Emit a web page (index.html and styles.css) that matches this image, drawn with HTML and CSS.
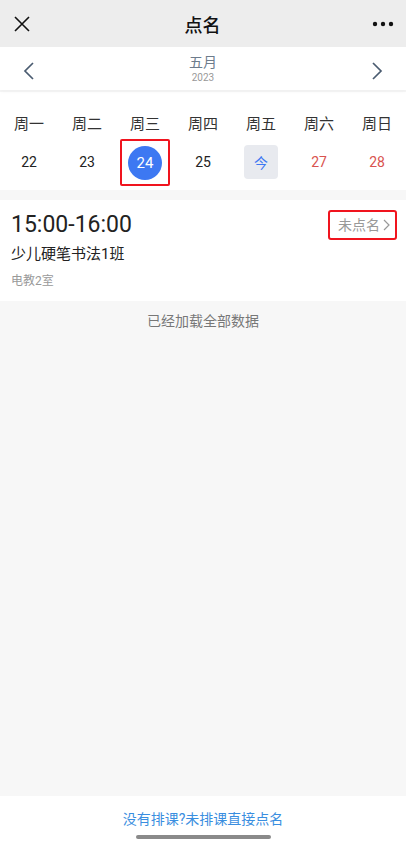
FILE: index.html
```html
<!DOCTYPE html>
<html>
<head>
  <meta charset="utf-8">
  <title>点名</title>
  <link rel="stylesheet" href="styles.css">
</head>
<body>
  <div class="page">
    <div class="topbar">
      <span class="top-icon">
        <svg width="18" height="18" viewBox="0 0 18 18"><path d="M2 2 L16 16 M16 2 L2 16" stroke="#111" stroke-width="1.6" fill="none"/></svg>
      </span>
      <div class="title">点名</div>
      <span class="top-icon">
        <svg width="22" height="6" viewBox="0 0 22 6"><circle cx="3" cy="3" r="2.2" fill="#111"/><circle cx="11" cy="3" r="2.2" fill="#111"/><circle cx="19" cy="3" r="2.2" fill="#111"/></svg>
      </span>
    </div>

    <div class="monthbar">
      <span class="arrow">
        <svg width="12" height="18" viewBox="0 0 12 18"><path d="M10 1 L2 9 L10 17" stroke="#4a5b70" stroke-width="1.7" fill="none"/></svg>
      </span>
      <div class="month">
        <div class="month-name">五月</div>
        <div class="month-year">2023</div>
      </div>
      <span class="arrow">
        <svg width="12" height="18" viewBox="0 0 12 18"><path d="M2 1 L10 9 L2 17" stroke="#4a5b70" stroke-width="1.7" fill="none"/></svg>
      </span>
    </div>

    <div class="week">
      <div class="week-labels">
        <span>周一</span><span>周二</span><span>周三</span><span>周四</span><span>周五</span><span>周六</span><span>周日</span>
      </div>
      <div class="week-days">
        <div class="day"><span>22</span></div>
        <div class="day"><span>23</span></div>
        <div class="day"><span class="marked"><span class="picked">24</span></span></div>
        <div class="day"><span>25</span></div>
        <div class="day"><span class="today">今</span></div>
        <div class="day weekend"><span>27</span></div>
        <div class="day weekend"><span>28</span></div>
      </div>
    </div>

    <div class="lesson">
      <div class="lesson-head">
        <div class="lesson-time">15:00-16:00</div>
        <span class="lesson-state">未点名
          <svg width="7" height="12" viewBox="0 0 7 12"><path d="M1 1 L6 6 L1 11" stroke="#999" stroke-width="1.2" fill="none"/></svg>
        </span>
      </div>
      <div class="lesson-name">少儿硬笔书法1班</div>
      <div class="lesson-room">电教2室</div>
    </div>

    <div class="loaded">已经加载全部数据</div>

    <div class="footer">
      <a class="direct">没有排课?未排课直接点名</a>
      <div class="home-bar"></div>
    </div>
  </div>
</body>
</html>
```

FILE: styles.css
```css
body {
  margin: 0;
  font-family: Roboto, "Noto Sans CJK SC", sans-serif;
  background-color: #f7f7f7;
  color: #222;
}

.page {
  min-height: 850px;
  display: flex;
  flex-direction: column;
}

.topbar {
  height: 47px;
  background-color: #ededed;
  display: flex;
  align-items: center;
  justify-content: space-between;
  padding: 0 12px 0 11px;
}

.top-icon {
  width: 22px;
  display: flex;
  justify-content: center;
}

.title {
  font-size: 18px;
  font-weight: 500;
  color: #111;
}

.monthbar {
  height: 43px;
  background-color: #fff;
  display: flex;
  align-items: center;
  justify-content: space-between;
  padding: 0 23px;
  box-shadow: 0 2px 3px rgba(0, 0, 0, 0.03);
  position: relative;
}

.arrow {
  display: flex;
  padding-top: 4px;
}

.month {
  text-align: center;
}

.month-name {
  font-size: 14px;
  line-height: 18px;
  color: #6d7c8c;
}

.month-year {
  font-size: 10px;
  line-height: 13px;
  color: #999;
}

.week {
  background-color: #fff;
  padding: 22px 0 11px;
  margin-top: 2px;
}

.week-labels,
.week-days {
  display: grid;
  grid-template-columns: repeat(7, 1fr);
  text-align: center;
}

.week-labels span {
  font-size: 15px;
  line-height: 20px;
  color: #333;
}

.week-days {
  margin-top: 11px;
}

.day {
  height: 34px;
  display: flex;
  align-items: center;
  justify-content: center;
  font-size: 14px;
  color: #222;
}

.day.weekend {
  color: #d9534f;
}

.marked {
  border: 2px solid #f0141e;
  border-radius: 2px;
  width: 46px;
  height: 43px;
  display: flex;
  align-items: center;
  justify-content: center;
  margin: -6px 0 -7px;
}

.picked {
  width: 34px;
  height: 34px;
  border-radius: 50%;
  background-color: #3d78f2;
  color: #fff;
  font-size: 15px;
  display: flex;
  align-items: center;
  justify-content: center;
}

.today {
  width: 34px;
  height: 34px;
  border-radius: 4px;
  background-color: #e8eaef;
  color: #3d78f2;
  display: flex;
  align-items: center;
  justify-content: center;
}

.lesson {
  background-color: #fff;
  margin-top: 10px;
  padding: 10px 9px 12px 11px;
}

.lesson-head {
  display: flex;
  justify-content: space-between;
  align-items: center;
}

.lesson-time {
  font-size: 23px;
  line-height: 30px;
  color: #222;
}

.lesson-state {
  border: 2px solid #f0141e;
  border-radius: 3px;
  padding: 3px 5px 3px 8px;
  font-size: 14px;
  line-height: 20px;
  color: #999;
  display: flex;
  align-items: center;
  gap: 3px;
}

.lesson-name {
  font-size: 15px;
  line-height: 22px;
  margin-top: 3px;
  color: #222;
}

.lesson-room {
  font-size: 12px;
  line-height: 16px;
  margin-top: 8px;
  color: #999;
}

.loaded {
  text-align: center;
  font-size: 14px;
  color: #777;
  margin-top: 10px;
  line-height: 20px;
}

.footer {
  margin-top: auto;
  height: 54px;
  background-color: #fff;
  display: flex;
  flex-direction: column;
  align-items: center;
}

.direct {
  font-size: 14px;
  line-height: 20px;
  color: #3a8ee0;
  margin-top: 13px;
}

.home-bar {
  width: 135px;
  height: 4px;
  border-radius: 2px;
  background-color: #8a8a8a;
  margin-top: 6px;
}
```
